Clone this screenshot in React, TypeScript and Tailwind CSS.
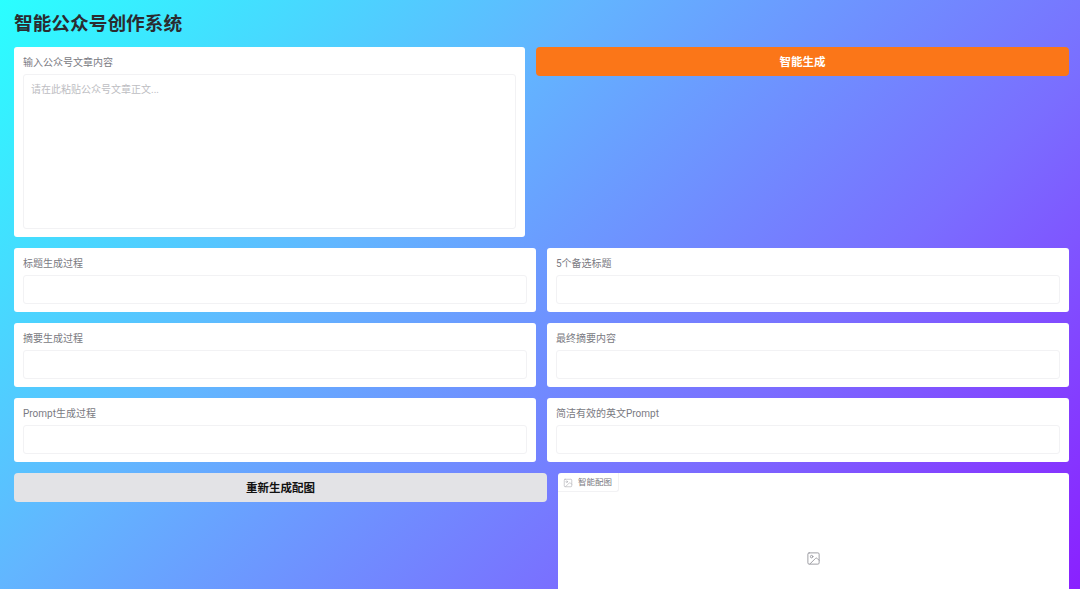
import { Image } from 'lucide-react'

const font = "font-['Roboto','Noto_Sans_CJK_SC',sans-serif]"

function Field({ label, className = '' }: { label: string; className?: string }) {
  return (
    <div className={`h-[64px] rounded-[3px] bg-white px-[9px] pt-[8px] ${className}`}>
      <div className="text-[10px] leading-[15px] text-[#7a7a82]">{label}</div>
      <div className="mt-[4px] h-[29px] rounded-[3px] border border-[#f2f2f4] bg-white" />
    </div>
  )
}

export default function App() {
  return (
    <div className={`${font} h-[589px] overflow-hidden bg-[linear-gradient(135deg,#2affff_0%,#62b6ff_35%,#7a6eff_69%,#8a20ff_100%)] pl-[14px] pr-[11px]`}>
      <h1 className="pt-[11px] text-[18.7px] font-bold leading-[27px] text-[#2b2b30]">智能公众号创作系统</h1>

      <div className="mt-[9px] flex gap-[11px]">
        <div className="h-[190px] w-[511px] rounded-[3px] bg-white px-[9px] pt-[8px]">
          <div className="text-[10px] leading-[15px] text-[#7a7a82]">输入公众号文章内容</div>
          <div className="mt-[4px] h-[155px] rounded-[3px] border border-[#f2f2f4] px-[7px] py-[7px] text-[10px] leading-[15px] text-[#bdbdc2]">
            请在此粘贴公众号文章正文...
          </div>
        </div>
        <button className="h-[29px] flex-1 rounded-[4px] bg-[#fb7618] pt-[2px] text-[11.5px] font-bold text-white">智能生成</button>
      </div>

      <div className="mt-[11px] grid grid-cols-2 gap-x-[11px] gap-y-[11px]">
        <Field label="标题生成过程" />
        <Field label="5个备选标题" />
        <Field label="摘要生成过程" />
        <Field label="最终摘要内容" />
        <Field label="Prompt生成过程" />
        <Field label="简洁有效的英文Prompt" />
      </div>

      <div className="mt-[11px] flex gap-[11px]">
        <button className="h-[29px] w-[533px] rounded-[4px] bg-[#e3e3e6] pt-[2px] text-[11.5px] font-bold text-[#111]">重新生成配图</button>
        <div className="relative flex h-[171px] flex-1 items-center justify-center rounded-[3px] bg-white">
          <div className="absolute left-0 top-0 flex h-[19px] items-center gap-[5px] rounded-br-[3px] border-b border-r border-[#f2f2f4] pl-[5px] pr-[6px] pt-[1px] text-[8.5px] text-[#7a7a82]">
            <Image size={10} strokeWidth={1.5} className="text-[#b0b0b6]" />
            <span>智能配图</span>
          </div>
          <Image size={15} strokeWidth={1.5} className="text-[#9a9aa0]" />
        </div>
      </div>
    </div>
  )
}
